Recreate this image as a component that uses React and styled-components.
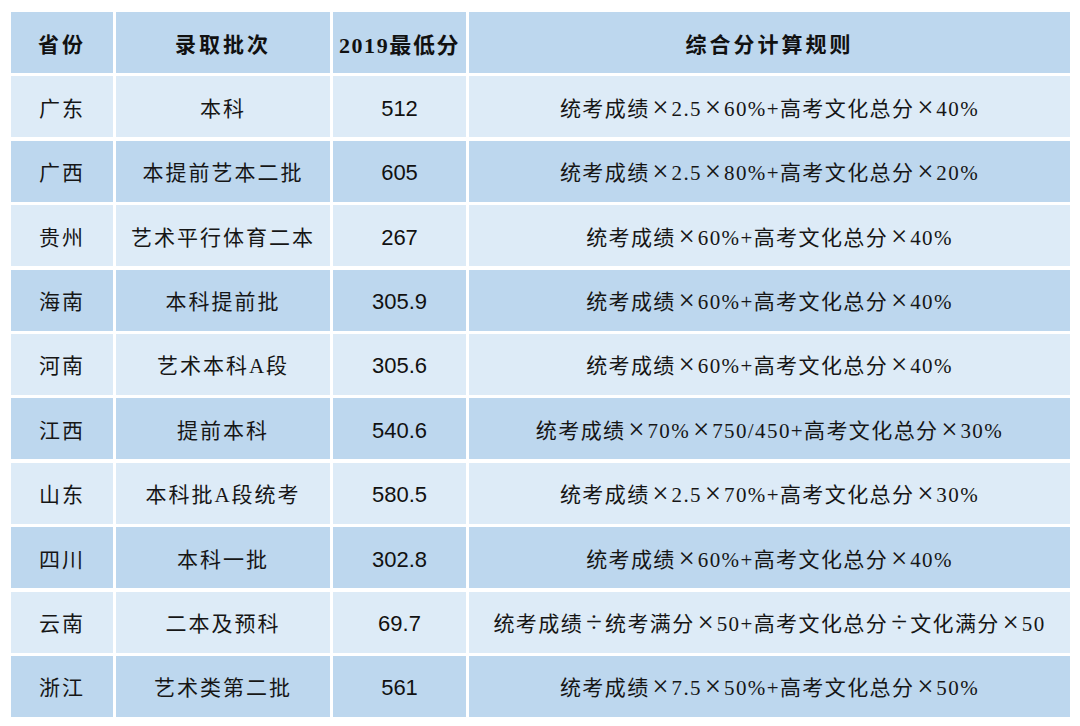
import React from "react";
import styled, { createGlobalStyle } from "styled-components";

const GlobalStyle = createGlobalStyle`
  html, body {
    margin: 0;
    padding: 0;
    background: #ffffff;
  }
`;

const Page = styled.div`
  width: 1080px;
  height: 726px;
  padding: 12px 0 0 11px;
  box-sizing: border-box;
  background: #ffffff;
`;

const Table = styled.div`
  display: grid;
  grid-template-columns: 102px 214px 133px 601px;
  grid-auto-rows: 61px;
  gap: 3.4px 3px;
`;

const Cell = styled.div`
  display: flex;
  align-items: center;
  justify-content: center;
  background: ${(p) => (p.$dark ? "#bdd7ee" : "#ddebf7")};
  color: #161616;
  font-family: "Liberation Serif", "Noto Sans CJK SC", serif;
  font-size: 21px;
  letter-spacing: 2px;
  white-space: nowrap;
`;

const HeadCell = styled(Cell)`
  color: #111;
  font-weight: bold;
  font-size: ${(p) => (p.$tight ? "22px" : "21px")};
  letter-spacing: ${(p) => (p.$tight ? "1.6px" : "3px")};
`;

const ScoreCell = styled(Cell)`
  font-family: "Liberation Sans", Arial, sans-serif;
  font-size: 22px;
  letter-spacing: 0;
  color: #111;
  padding-top: 4px;
`;

const RuleCell = styled(Cell)`
  font-size: 21px;
  letter-spacing: 1.4px;
  padding-top: 5px;
`;

const RuleText = styled.span`
  line-height: 1;
`;

const Op = styled.span`
  display: inline-block;
  width: 22px;
  text-align: center;
  font-family: "Liberation Serif", serif;
  font-size: 29px;
  line-height: 0;
  letter-spacing: 0;
  vertical-align: -1px;
`;

const rows = [
  ["广东", "本科", "512", "统考成绩×2.5×60%+高考文化总分×40%"],
  ["广西", "本提前艺本二批", "605", "统考成绩×2.5×80%+高考文化总分×20%"],
  ["贵州", "艺术平行体育二本", "267", "统考成绩×60%+高考文化总分×40%"],
  ["海南", "本科提前批", "305.9", "统考成绩×60%+高考文化总分×40%"],
  ["河南", "艺术本科A段", "305.6", "统考成绩×60%+高考文化总分×40%"],
  ["江西", "提前本科", "540.6", "统考成绩×70%×750/450+高考文化总分×30%"],
  ["山东", "本科批A段统考", "580.5", "统考成绩×2.5×70%+高考文化总分×30%"],
  ["四川", "本科一批", "302.8", "统考成绩×60%+高考文化总分×40%"],
  ["云南", "二本及预科", "69.7", "统考成绩÷统考满分×50+高考文化总分÷文化满分×50"],
  ["浙江", "艺术类第二批", "561", "统考成绩×7.5×50%+高考文化总分×50%"],
];

// give × and ÷ a wide slot, as the spreadsheet font does
const renderRule = (text) =>
  text.split(/([×÷])/).map((part, i) =>
    part === "×" || part === "÷" ? <Op key={i}>{part}</Op> : part
  );

export default function App() {
  return (
    <Page>
      <GlobalStyle />
      <Table>
        <HeadCell $dark>省份</HeadCell>
        <HeadCell $dark>录取批次</HeadCell>
        <HeadCell $dark $tight>2019最低分</HeadCell>
        <HeadCell $dark>综合分计算规则</HeadCell>
        {rows.map(([prov, batch, score, rule], i) => {
          const dark = i % 2 === 1;
          return (
            <React.Fragment key={prov}>
              <Cell $dark={dark}>{prov}</Cell>
              <Cell $dark={dark}>{batch}</Cell>
              <ScoreCell $dark={dark}>{score}</ScoreCell>
              <RuleCell $dark={dark}>
                <RuleText>{renderRule(rule)}</RuleText>
              </RuleCell>
            </React.Fragment>
          );
        })}
      </Table>
    </Page>
  );
}
